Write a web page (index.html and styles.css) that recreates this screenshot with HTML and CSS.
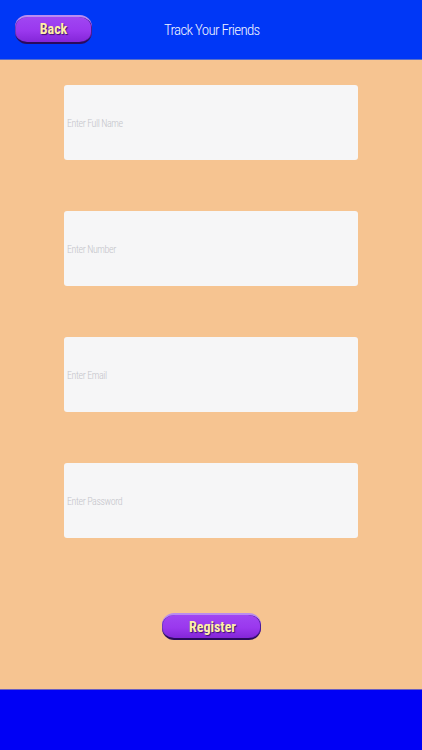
FILE: index.html
```html
<!DOCTYPE html>
<html lang="en">
<head>
  <meta charset="UTF-8" />
  <meta name="viewport" content="width=device-width, initial-scale=1.0" />
  <title>Track Your Friends</title>
  <link rel="stylesheet" href="styles.css">
</head>
<body>
  <div class="app">
    <header class="top-bar">
      <button class="game-btn back-btn">Back</button>
      <h1 class="top-title">Track Your Friends</h1>
    </header>

    <main class="content">
      <form class="register-form">
        <input class="field" type="text" placeholder="Enter Full Name">
        <input class="field" type="text" placeholder="Enter Number">
        <input class="field" type="text" placeholder="Enter Email">
        <input class="field" type="password" placeholder="Enter Password">
        <button class="game-btn register-btn" type="button">Register</button>
      </form>
    </main>

    <footer class="bottom-bar"></footer>
  </div>
</body>
</html>
```

FILE: styles.css
```css
html, body {
  margin: 0;
  padding: 0;
  height: 100%;
  overflow: hidden;
  font-family: Roboto, sans-serif;
  font-stretch: 75%;
}

.app {
  display: flex;
  flex-direction: column;
  width: 422px;
  height: 750px;
  background-color: #f6c491;
}

.top-bar {
  flex: 0 0 59px;
  display: flex;
  align-items: center;
  padding: 0 0 0 15px;
  background-color: #0037f6;
  border-bottom: 1px solid #5a6fc8;
}

.top-title {
  margin: 0 0 0 72px;
  font-size: 15px;
  font-weight: 300;
  font-stretch: 75%;
  letter-spacing: -0.7px;
  color: #f2f5ff;
}

.game-btn {
  padding: 0;
  border: none;
  border-top: 2px solid #b98cf0;
  border-bottom: 2px solid #2a0a5c;
  border-radius: 12px;
  background: linear-gradient(to bottom, #a046f2 0%, #9a38ee 55%, #8426d8 100%);
  box-shadow: inset -1px 0 0 #4a1c96, inset 1px 0 0 #6b3bc0;
  font-family: Roboto, sans-serif;
  font-size: 14px;
  font-weight: 700;
  font-stretch: 75%;
  color: #fdf0a8;
  text-shadow: 1px 1px 1px #3b1470;
}

.back-btn {
  width: 77px;
  height: 29px;
  margin-bottom: 1px;
}

.content {
  flex: 1;
  display: flex;
  justify-content: center;
  padding-top: 25px;
}

.register-form {
  display: flex;
  flex-direction: column;
  align-items: center;
  width: 294px;
  gap: 51px;
}

.field {
  box-sizing: border-box;
  width: 294px;
  height: 75px;
  padding: 2px 3px 0;
  border: none;
  border-radius: 3px;
  background-color: #f6f6f7;
  font-family: Roboto, sans-serif;
  font-size: 10px;
  font-weight: 300;
  font-stretch: 75%;
  letter-spacing: -0.4px;
}

.field::placeholder {
  color: #c4c4ca;
  opacity: 1;
}

.register-btn {
  width: 99px;
  height: 27px;
  margin-top: 24px;
  padding-left: 3px;
}

.bottom-bar {
  flex: 0 0 60px;
  background-color: #0000f5;
  border-top: 1px solid #6a5fc0;
}
```
